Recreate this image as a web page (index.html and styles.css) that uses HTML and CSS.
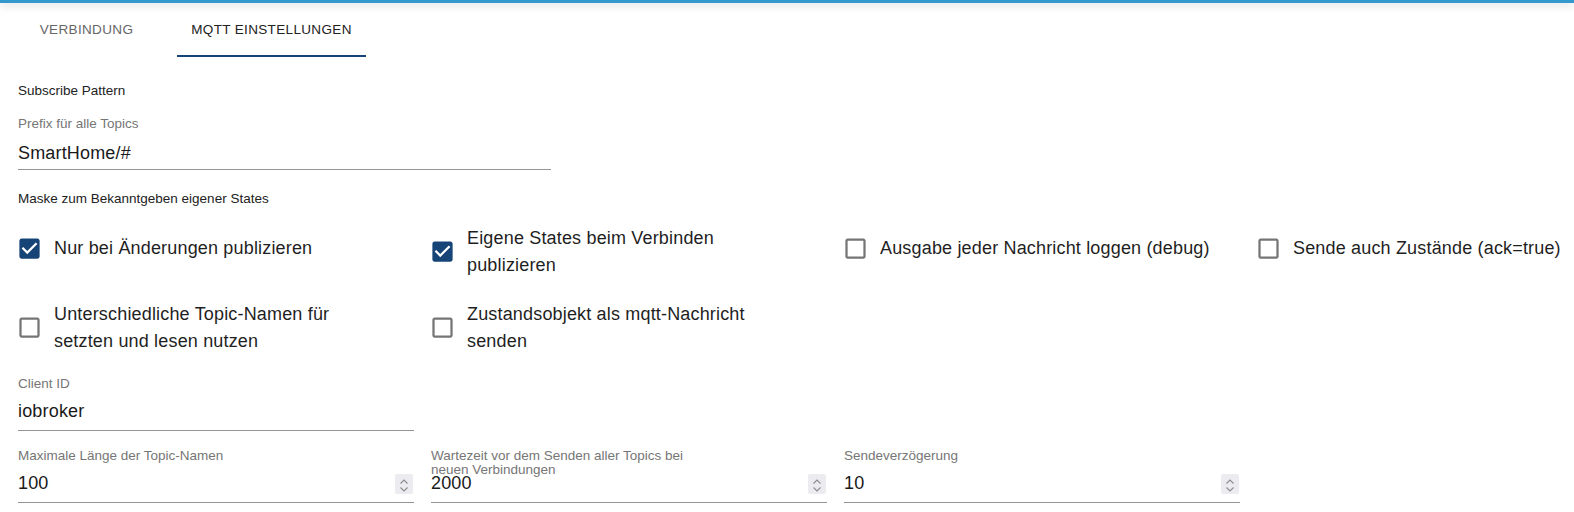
FILE: index.html
```html
<!DOCTYPE html>
<html lang="de">
<head>
    <meta charset="UTF-8">
    <title>MQTT Einstellungen</title>
    <link rel="stylesheet" href="styles.css">
</head>
<body>
    <div class="topbar"></div>

    <!-- Tabs -->
    <div class="tabs">
        <div class="tab tab-first">Verbindung</div>
        <div class="tab tab-second active">MQTT Einstellungen</div>
    </div>

    <div class="content">
        <div class="section-title">Subscribe Pattern</div>

        <div class="field field-wide field-prefix">
            <label class="field-label">Prefix für alle Topics</label>
            <div class="field-input"><input type="text" value="SmartHome/#"></div>
        </div>

        <div class="section-title section-mask">Maske zum Bekanntgeben eigener States</div>

        <!-- Checkboxes -->
        <div class="check-grid">
            <label class="check">
                <svg class="box checked" viewBox="0 0 24 24"><path d="M19 3H5c-1.11 0-2 .9-2 2v14c0 1.1.89 2 2 2h14c1.11 0 2-.9 2-2V5c0-1.1-.89-2-2-2zm-9 14l-5-5 1.41-1.41L10 14.17l7.59-7.59L19 8l-9 9z"/></svg>
                <span class="check-text">Nur bei Änderungen publizieren</span>
            </label>
            <label class="check">
                <svg class="box checked" viewBox="0 0 24 24"><path d="M19 3H5c-1.11 0-2 .9-2 2v14c0 1.1.89 2 2 2h14c1.11 0 2-.9 2-2V5c0-1.1-.89-2-2-2zm-9 14l-5-5 1.41-1.41L10 14.17l7.59-7.59L19 8l-9 9z"/></svg>
                <span class="check-text">Eigene States beim Verbinden<br>publizieren</span>
            </label>
            <label class="check">
                <svg class="box" viewBox="0 0 24 24"><path d="M19 5v14H5V5h14m0-2H5c-1.1 0-2 .9-2 2v14c0 1.1.9 2 2 2h14c1.1 0 2-.9 2-2V5c0-1.1-.9-2-2-2z"/></svg>
                <span class="check-text">Ausgabe jeder Nachricht loggen (debug)</span>
            </label>
            <label class="check">
                <svg class="box" viewBox="0 0 24 24"><path d="M19 5v14H5V5h14m0-2H5c-1.1 0-2 .9-2 2v14c0 1.1.9 2 2 2h14c1.1 0 2-.9 2-2V5c0-1.1-.9-2-2-2z"/></svg>
                <span class="check-text">Sende auch Zustände (ack=true)</span>
            </label>
            <label class="check">
                <svg class="box" viewBox="0 0 24 24"><path d="M19 5v14H5V5h14m0-2H5c-1.1 0-2 .9-2 2v14c0 1.1.9 2 2 2h14c1.1 0 2-.9 2-2V5c0-1.1-.9-2-2-2z"/></svg>
                <span class="check-text">Unterschiedliche Topic-Namen für<br>setzten und lesen nutzen</span>
            </label>
            <label class="check">
                <svg class="box" viewBox="0 0 24 24"><path d="M19 5v14H5V5h14m0-2H5c-1.1 0-2 .9-2 2v14c0 1.1.9 2 2 2h14c1.1 0 2-.9 2-2V5c0-1.1-.9-2-2-2z"/></svg>
                <span class="check-text">Zustandsobjekt als mqtt-Nachricht<br>senden</span>
            </label>
        </div>

        <div class="field field-client">
            <label class="field-label">Client ID</label>
            <div class="field-input"><input type="text" value="iobroker"></div>
        </div>

        <!-- Number fields -->
        <div class="number-row">
            <div class="field">
                <label class="field-label">Maximale Länge der Topic-Namen</label>
                <div class="field-input">
                    <input type="text" value="100">
                    <span class="spin"><svg viewBox="0 0 18 20"><path d="M5.5 9.5L9 6l3.5 3.5M5.5 13.5L9 17l3.5-3.5"/></svg></span>
                </div>
            </div>
            <div class="field">
                <label class="field-label">Wartezeit vor dem Senden aller Topics bei<br>neuen Verbindungen</label>
                <div class="field-input">
                    <input type="text" value="2000">
                    <span class="spin"><svg viewBox="0 0 18 20"><path d="M5.5 9.5L9 6l3.5 3.5M5.5 13.5L9 17l3.5-3.5"/></svg></span>
                </div>
            </div>
            <div class="field">
                <label class="field-label">Sendeverzögerung</label>
                <div class="field-input">
                    <input type="text" value="10">
                    <span class="spin"><svg viewBox="0 0 18 20"><path d="M5.5 9.5L9 6l3.5 3.5M5.5 13.5L9 17l3.5-3.5"/></svg></span>
                </div>
            </div>
        </div>
    </div>
</body>
</html>
```

FILE: styles.css
```css
body {
    font-family: "Liberation Sans", Arial, sans-serif;
    margin: 0;
    padding: 0;
    background: #fff;
    color: #222;
    overflow: hidden;
}
.topbar {
    height: 3px;
    background: #3399cc;
    box-shadow: 0 2px 8px rgba(0, 0, 0, 0.22);
    position: relative;
    z-index: 1;
}
.tabs {
    display: flex;
    height: 54px;
}
.tab {
    padding: 17px 0 15px 0;
    line-height: 20px;
    font-size: 13.5px;
    letter-spacing: 0.35px;
    text-transform: uppercase;
    text-align: center;
    color: #666;
    border-bottom: 2px solid transparent;
}
.tab-first {
    width: 173px;
    margin-right: 4px;
}
.tab-second {
    width: 189px;
}
.tab.active {
    color: #222;
    border-bottom-color: #164477;
}
.content {
    padding-left: 18px;
}
.section-title {
    margin-top: 25.5px;
    font-size: 13.5px;
    line-height: 15px;
    color: #222;
}
.section-mask {
    margin-top: 20.5px;
}
.field {
    width: 395.5px;
}
.field-wide {
    width: 533px;
}
.field-prefix {
    margin-top: 19.5px;
}
.field-prefix .field-label {
    margin-bottom: 9px;
}
.field-prefix .field-input {
    padding-bottom: 2px;
}
.field-client {
    margin-top: 22.5px;
}
.field-label {
    display: block;
    height: 14px;
    line-height: 14px;
    font-size: 13.5px;
    color: #767676;
    margin-bottom: 7px;
    white-space: nowrap;
}
.field-input {
    display: flex;
    align-items: center;
    padding-bottom: 5px;
    border-bottom: 1px solid #949494;
}
.field-input input {
    flex: 1;
    min-width: 0;
    height: 27px;
    line-height: 27px;
    padding: 0;
    border: none;
    outline: none;
    background: transparent;
    font: inherit;
    font-size: 18px;
    letter-spacing: 0.17px;
    color: #1a1a1a;
}
.spin {
    width: 18px;
    height: 20px;
    margin-right: 1px;
    background: #ececf0;
    border-radius: 2px;
}
.spin svg {
    display: block;
    width: 18px;
    height: 20px;
    fill: none;
    stroke: #8c8c8c;
    stroke-width: 1.1;
}
.check-grid {
    display: grid;
    grid-template-columns: repeat(3, 413px) auto;
    row-gap: 22px;
    align-items: start;
    margin-top: 19px;
}
.check {
    display: flex;
    align-items: center;
    min-height: 47px;
}
.box {
    flex: none;
    width: 27px;
    height: 27px;
    margin-left: -2px;
    margin-right: 11px;
    fill: #757575;
}
.box.checked {
    fill: #164477;
}
.check-text {
    font-size: 18px;
    line-height: 27px;
    letter-spacing: 0.17px;
    color: #1f1f1f;
}
.number-row {
    display: grid;
    grid-template-columns: repeat(3, 395.5px);
    column-gap: 17.5px;
    margin-top: 18px;
}
```
